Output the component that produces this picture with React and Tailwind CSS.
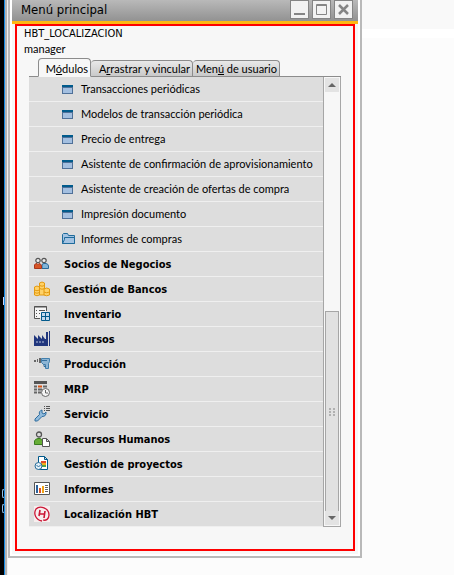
import React from "react";

const win = (
  <svg width="11" height="9" viewBox="0 0 11 9" shapeRendering="crispEdges">
    <rect width="11" height="9" fill="#4f7098" />
    <rect width="9" height="5" x="1" y="3" fill="#a3bfe0" />
    <rect width="11" height="2" fill="#005b8c" />
  </svg>
);

const folder = (
  <svg width="13" height="12" viewBox="0 0 13 12" fill="#a3c3e2" stroke="#1f6b9b">
    <path d="M.5 10.500V1.500L1.500.5H5.500L6.500 2.500H12.500V10.500Z" />
    <path d="M.5 10.500L2.500 6.500V4.500H12.500V10.500Z" />
  </svg>
);

const icons = {
  people: (
    <>
      <circle cx="4" cy="4.500" r="2.200" fill="#eee" stroke="#555" strokeWidth="1.200" />
      <circle cx="10" cy="4.500" r="2.200" fill="#eee" stroke="#555" strokeWidth="1.200" />
      <path d="M8 12.500V9Q8 7.500 10 7.500H12Q14.500 8 14.500 10V12.500Z" fill="#83b5d8" stroke="#286a99" />
      <path d="M.5 12.500V9Q1 7.500 3 7.500L4 8.500L5 7.500Q7.500 8 7.500 10V12.500Z" fill="#d75425" stroke="#a7361c" />
    </>
  ),
  coins: (
    <g fill="#ffd268" stroke="#e39a10">
      <path d="M5.500 2Q8 0 10.500 2V14H5.500Z" />
      <path d="M.5 6Q3 4 5.500 6V14Q3 15.500.5 14Z" />
      <path d="M10 8Q12.500 6 15.500 8V14Q12.500 15.500 10 14Z" />
      <path d="M5.500 4.500Q8 6 10.500 4.500M5.500 7.500Q8 9 10.500 7.500M.5 9Q3 10.500 5.500 9M.5 11.500Q3 13 5.500 11.500M10 11Q12.500 12.500 15.500 11" fill="none" />
    </g>
  ),
  inventory: (
    <>
      <path d="M6 12.500H.5V.5H12.500V5" fill="#f5f5f5" stroke="#555" />
      <path d="M0 1H13M2 4.500H3M5 4.500H11M2 7.500H3M5 7.500H6M2 10.500H3" stroke="#555" />
      <path d="M7.500 6.500H11.500V10.500H7.500ZM11.500 6.500H15.500V10.500H11.500ZM7.500 10.500H11.500V14.500H7.500ZM11.500 10.500H15.500V14.500H11.500Z" fill="#c3d9ec" stroke="#00598b" />
    </>
  ),
  factory: (
    <>
      <path d="M0 15V4L4 8V4L8 8V4L11 8H12V1H14V15ZM15 0H16V15H15Z" fill="#20367d" />
      <path d="M2 11H4M5 11H7M8 11H10" stroke="#b9c4df" />
    </>
  ),
  drill: (
    <>
      <path d="M0 4H2V6H0ZM3 3H4V6H3ZM5 2H7V7H5Z" fill="#666" />
      <path d="M7.500 2.500H15.500V5.500L14.500 7.500V12.500H11.500V8.500H9.500L7.500 6.500Z" fill="#8db5d4" stroke="#4380ad" />
      <path d="M8 4.500H13M10 8V10.500H12" fill="none" stroke="#356f9e" />
    </>
  ),
  mrp: (
    <>
      <path d="M0 1.500H13" stroke="#555" strokeWidth="3" />
      <path d="M0 5.500H3M0 8.500H3M0 11.500H3M4 8.500H8M4 11.500H7M9 5.500H13" stroke="#666" strokeWidth="2" />
      <path d="M4 5.500H8" stroke="#d75416" strokeWidth="2" />
      <circle cx="11.500" cy="11.500" r="4" fill="#f5f5f5" stroke="#666" />
      <path d="M11.500 9V12H14" fill="none" stroke="#666" />
    </>
  ),
  service: (
    <>
      <path d="M1 13L5.500 8.500Q4.500 5 8 4V7L10 8L12 6Q12.500 10.500 8 10.500L3.500 15H1Z" fill="#91bbdc" stroke="#2e6c9e" />
      <path d="M10 .5H11M12 .5H16M10 2.500H11M12 2.500H16M10 4.500H11M12 4.500H16" stroke="#555" />
    </>
  ),
  hr: (
    <>
      <circle cx="5" cy="3.500" r="2.500" fill="#ddd" stroke="#555" strokeWidth="1.300" />
      <path d="M.5 13.500V10Q1 8 4 7.500H6Q8 8 8.500 10V13.500Z" fill="#67ad36" stroke="#397c20" />
      <path d="M8.500 7.500H12.500L15.500 10.500V15.500H8.500Z M12.500 7.500V10.500H15.500" fill="#fff" stroke="#555" />
    </>
  ),
  project: (
    <>
      <path d="M4.500 .5H10.500L13.500 3.500V13.500H4.500Z M10.500 .5V3.500H13.500" fill="#fff" stroke="#00598b" />
      <path d="M7 6H12" stroke="#df4b28" strokeWidth="2" />
      <path d="M7 8H12" stroke="#f6af1c" strokeWidth="2" />
      <path d="M7 10H12" stroke="#54a442" strokeWidth="2" />
      <circle cx="4.500" cy="10" r="3.500" fill="#e3eff7" stroke="#286d99" />
      <path d="M2.500 9L4.500 11L7 8.500" fill="none" stroke="#286d99" />
    </>
  ),
  chart: (
    <>
      <path d="M.5 1.500H15.500V13.500H.5Z" fill="#fff" stroke="#555" />
      <path d="M2 4H4V12H2Z" fill="#2d619a" />
      <path d="M5 7H7V12H5Z" fill="#dc5426" />
      <path d="M8 5H10V12H8Z" fill="#f1a315" />
      <path d="M11 4.500H14M11 6.500H14M11 8.500H14M11 10.500H14" stroke="#666" />
    </>
  ),
  hbt: (
    <>
      <path d="M0 0H16V16H0Z" fill="#f7eeee" />
      <path d="M8 15C2 14-1 8 2 3C6-1 15 2 15 9C15 13 12 15 9 14" fill="none" stroke="#cb1635" strokeWidth="1.300" />
      <path d="M6 4L5 10M11 5L10 12M6 8L10 8" stroke="#cb1635" strokeWidth="1.600" />
    </>
  ),
};

const submenu = [
  "Transacciones periódicas",
  "Modelos de transacción periódica",
  "Precio de entrega",
  "Asistente de confirmación de aprovisionamiento",
  "Asistente de creación de ofertas de compra",
  "Impresión documento",
  "Informes de compras",
];

const modules = [
  ["Socios de Negocios", "people"],
  ["Gestión de Bancos", "coins"],
  ["Inventario", "inventory"],
  ["Recursos", "factory"],
  ["Producción", "drill"],
  ["MRP", "mrp"],
  ["Servicio", "service"],
  ["Recursos Humanos", "hr"],
  ["Gestión de proyectos", "project"],
  ["Informes", "chart"],
  ["Localización HBT", "hbt"],
];

function WindowButton({ label, children }) {
  return (
    <button aria-label={label} className="grid h-[19px] w-[19px] place-items-center border border-[#858585] bg-[#f2f2f2]">
      <svg width="13" height="13" viewBox="0 0 13 13" fill="none" stroke="#858585">{children}</svg>
    </button>
  );
}

function Tab({ active = false, className, children }) {
  return (
    <button
      role="tab"
      aria-selected={active}
      className={`rounded-t-sm border border-[#8c8c8c] pr-[2px] text-right leading-[15px] whitespace-nowrap ${active ? "-mb-px h-[19px] border-b-[#f7f7f7] bg-[#f7f7f7] pt-[2px]" : "h-4 border-b-0 border-l-0 bg-linear-to-b from-[#e9e9e9] to-[#c9c9c9]"} ${className}`}
    >
      {children}
    </button>
  );
}

export default function App() {
  return (
    <div className="flex min-h-screen bg-[#fcfcfc] font-['Lato','Liberation_Sans',sans-serif] text-[11px] leading-4 text-black">
      <aside className="flex w-1 shrink-0 flex-col items-end bg-black">
        <span className="mt-[297px] h-2 w-px bg-[#c8d8ff]" />
        <span className="mt-[184px] h-[9px] w-[2px] rounded-l-full border-y border-l border-[#8fc0e8]" />
        <span className="mt-[6px] h-[9px] w-[2px] rounded-l-full border-y border-l border-[#8fc0e8]" />
      </aside>
      <div className="w-px shrink-0 bg-[#168be5]" />
      <div className="w-[3px] shrink-0 border-r border-[#f0f0f0] bg-[#b4b4b4]" />
      <main className="mb-[17px] w-[354px] border-x-2 border-b-2 border-[#b9b9b9] bg-white px-[2px] pb-[2px]">
        <header className="flex h-[21px] items-start justify-between bg-linear-to-b from-[#b9b9b9] to-[#929292] pr-[5px] pl-[9px]">
          <h1 className="pt-[2px] font-['DejaVu_Sans_Condensed','DejaVu_Sans',sans-serif] text-[13px]">Menú principal</h1>
          <div className="flex gap-[3px]">
            <WindowButton label="Minimizar"><path d="M1 11H12" strokeWidth="2" /></WindowButton>
            <WindowButton label="Maximizar"><path d="M1.500 1.500H11.500V11.500H1.500Z M2 2.500H11" /></WindowButton>
            <WindowButton label="Cerrar"><path d="M2 2L11 11M11 2L2 11" strokeWidth="2.500" /></WindowButton>
          </div>
        </header>
        <div className="h-[3px] bg-[#fdb813]" />
        <div className="bg-[#f7f7f7] px-[3px] pb-[3px]">
          <section className="border-2 border-[#fe0000] px-3 pb-[22px]">
            <div className="-ml-[5px] pb-[2px] leading-[15px]">
              <p className="font-['DejaVu_Sans_Condensed','DejaVu_Sans',sans-serif]">HBT_LOCALIZACION</p>
              <p>manager</p>
            </div>
            <div role="tablist" className="flex h-[19px] items-end border-b border-[#8c8c8c] pl-[9px]">
              <Tab active className="w-[53px]">M<u>ó</u>dulos</Tab>
              <Tab className="w-[102px]">A<u>r</u>rastrar y vincular</Tab>
              <Tab className="w-[87px]">Men<u>ú</u> de usuario</Tab>
            </div>
            <div className="flex">
              <nav className="min-w-0 flex-1 bg-[#dddddd]">
                {submenu.map((text, i) => (
                  <a key={text} href="#" className="flex h-[25px] items-center border-b border-[#efefef] pl-[33px] whitespace-nowrap">
                    <span className="w-[19px] shrink-0">{i === 6 ? folder : win}</span>{text}
                  </a>
                ))}
                {modules.map(([text, icon]) => (
                  <a key={text} href="#" className="flex h-[25px] items-center border-b border-[#efefef] pl-[5px] font-['DejaVu_Sans_Condensed','DejaVu_Sans',sans-serif] font-bold">
                    <svg className="mr-[14px]" width="16" height="16" viewBox="0 0 16 16">{icons[icon]}</svg>
                    <span className="pt-px">{text}</span>
                  </a>
                ))}
              </nav>
              <div className="flex w-[18px] flex-col border border-t-0 border-[#a6a6a6] bg-[#f7f7f7] p-px">
                <button aria-label="Subir" className="grid h-[14px] place-items-center bg-[#e3e3e3]">
                  <svg width="8" height="4"><path d="M0 4L4 0L8 4Z" fill="#666" /></svg>
                </button>
                <div className="flex-1" />
                <div className="grid h-[200px] place-items-center border border-b-0 border-[#a6a6a6] bg-[#e1e1e1]">
                  <svg width="6" height="8" fill="#b0b0b0"><path d="M0 0H2V2H0ZM4 0H6V2H4ZM0 3H2V5H0ZM4 3H6V5H4ZM0 6H2V8H0ZM4 6H6V8H4Z" /></svg>
                </div>
                <button aria-label="Bajar" className="grid h-[14px] place-items-center bg-[#e3e3e3]">
                  <svg width="8" height="4"><path d="M0 0H8L4 4Z" fill="#666" /></svg>
                </button>
              </div>
            </div>
          </section>
        </div>
      </main>
      <div className="flex-1">
        <div className="h-[29px] bg-[#f9f9f9]" />
        <div className="h-[9px] bg-white" />
      </div>
    </div>
  );
}
